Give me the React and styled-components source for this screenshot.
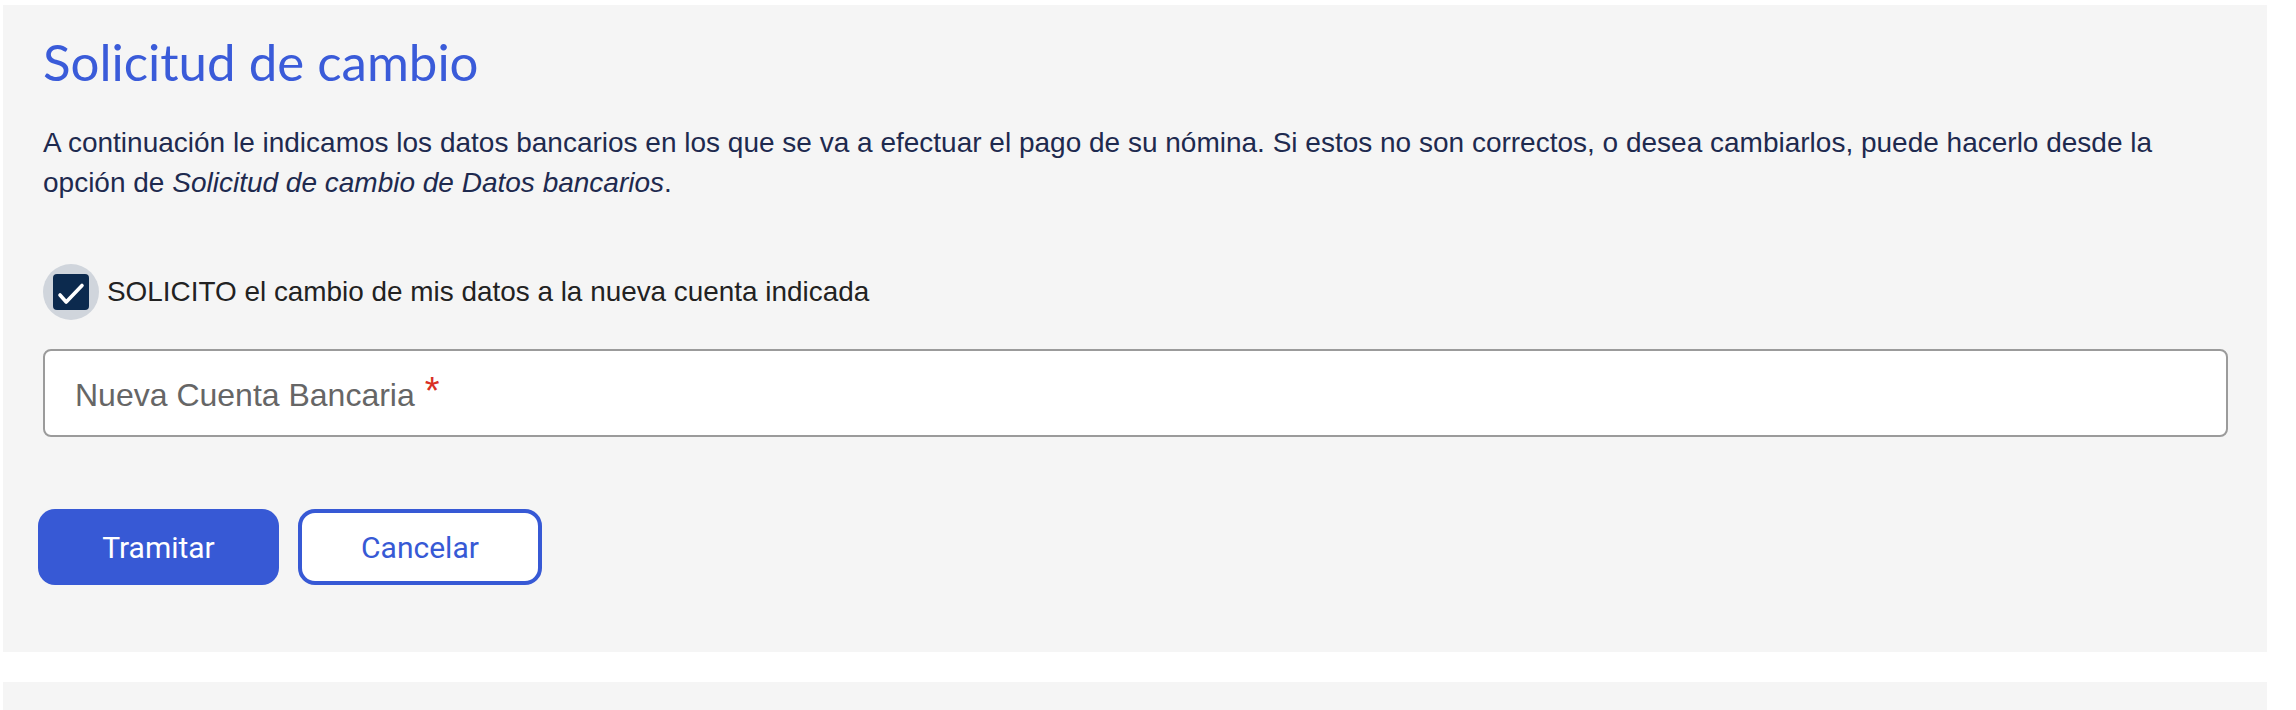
import React, { useState } from "react";
import styled, { createGlobalStyle } from "styled-components";

const GlobalStyle = createGlobalStyle`
  html, body {
    margin: 0;
    background: #ffffff;
  }
  body {
    font-family: "Liberation Sans", Arial, sans-serif;
  }
`;

const Page = styled.div`
  display: flex;
  flex-direction: column;
  gap: 30px;
  padding: 5px 29px 0 3px;
`;

const Panel = styled.section`
  background: #f5f5f5;
  padding: ${(p) => (p.$empty ? "0" : "27px 39px 67px 40px")};
  min-height: ${(p) => (p.$empty ? "60px" : "auto")};
`;

const Title = styled.h2`
  margin: 0;
  font-family: Lato, "Open Sans", sans-serif;
  font-weight: 400;
  font-size: 51px;
  line-height: 60px;
  color: #3a5bd9;
`;

const Intro = styled.p`
  margin: 31px 0 0;
  font-size: 28px;
  line-height: 40px;
  color: #1e2a4f;

  em {
    font-style: italic;
  }
`;

const CheckRow = styled.label`
  display: flex;
  align-items: center;
  gap: 8px;
  margin-top: 61px;
  font-size: 27.9px;
  color: #222222;
  cursor: pointer;
`;

const Halo = styled.span`
  display: flex;
  align-items: center;
  justify-content: center;
  width: 56px;
  height: 56px;
  border-radius: 50%;
  background: #d0d5dc;
`;

const Box = styled.span`
  display: flex;
  width: 36px;
  height: 36px;
  border-radius: 4px;
  background: ${(p) => (p.$checked ? "#0c2a4e" : "#ffffff")};
  border: ${(p) => (p.$checked ? "none" : "2px solid #0c2a4e")};
  box-sizing: border-box;
`;

const HiddenInput = styled.input`
  display: none;
`;

const Field = styled.label`
  display: flex;
  align-items: center;
  box-sizing: border-box;
  height: 88px;
  margin-top: 29px;
  padding: 0 30px;
  background: #ffffff;
  border: 2px solid #9b9b9b;
  border-radius: 8px;
`;

const Placeholder = styled.span`
  font-size: 32px;
  color: #666666;
  white-space: nowrap;
`;

const Required = styled.span`
  color: #d93025;
  font-size: 38px;
  margin-left: 10px;
  position: relative;
  top: -2px;
`;

const TextInput = styled.input`
  flex: 1;
  border: none;
  outline: none;
  background: transparent;
  font-size: 32px;
  font-family: inherit;
`;

const Actions = styled.div`
  display: flex;
  gap: 19px;
  margin: 72px 0 0 -5px;
`;

const Button = styled.button`
  box-sizing: border-box;
  width: ${(p) => (p.$outline ? "244px" : "241px")};
  height: 76px;
  border-radius: 17px;
  font-family: Roboto, sans-serif;
  font-size: 30px;
  font-weight: 400;
  cursor: pointer;
  background: ${(p) => (p.$outline ? "#ffffff" : "#3759d5")};
  color: ${(p) => (p.$outline ? "#3759d5" : "#ffffff")};
  border: ${(p) => (p.$outline ? "4px solid #3759d5" : "none")};
`;

const Check = () => (
  <svg width="36" height="36" viewBox="0 0 36 36" fill="none">
    <path
      d="M7 21l6.2 7L29 11.5"
      stroke="#ffffff"
      strokeWidth="3.6"
      strokeLinecap="round"
      strokeLinejoin="round"
    />
  </svg>
);

export default function App() {
  const [checked, setChecked] = useState(true);

  return (
    <Page>
      <GlobalStyle />
      <Panel>
        <Title>Solicitud de cambio</Title>
        <Intro>
          A continuación le indicamos los datos bancarios en los que se va a
          efectuar el pago de su nómina. Si estos no son correctos, o desea
          cambiarlos, puede hacerlo desde la opción de{" "}
          <em>Solicitud de cambio de Datos bancarios</em>.
        </Intro>
        <CheckRow>
          <HiddenInput
            type="checkbox"
            checked={checked}
            onChange={() => setChecked(!checked)}
          />
          <Halo>
            <Box $checked={checked}>{checked && <Check />}</Box>
          </Halo>
          SOLICITO el cambio de mis datos a la nueva cuenta indicada
        </CheckRow>
        <Field>
          <Placeholder>
            Nueva Cuenta Bancaria<Required>*</Required>
          </Placeholder>
          <TextInput type="text" />
        </Field>
        <Actions>
          <Button>Tramitar</Button>
          <Button $outline>Cancelar</Button>
        </Actions>
      </Panel>
      <Panel $empty />
    </Page>
  );
}
